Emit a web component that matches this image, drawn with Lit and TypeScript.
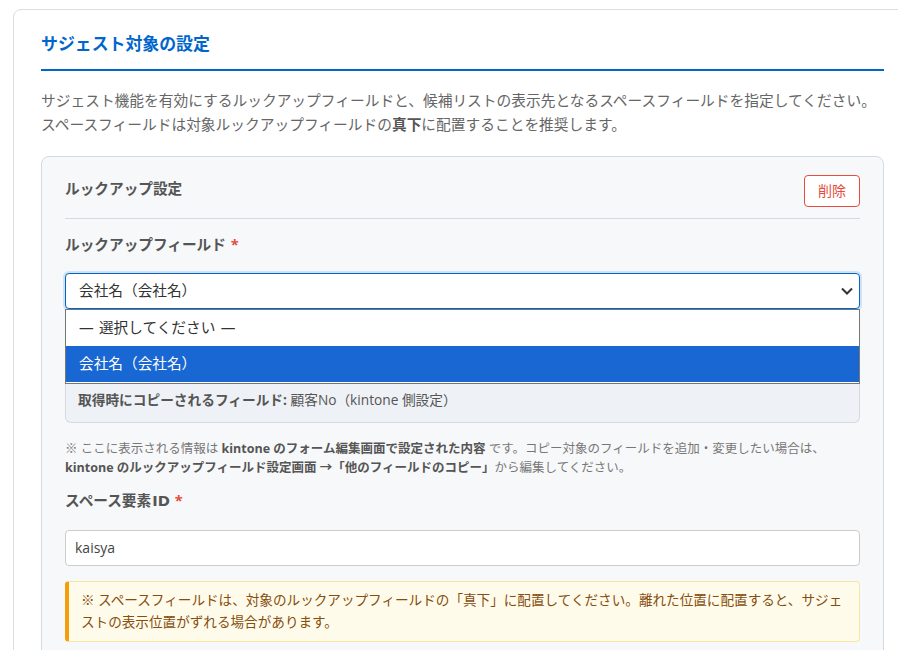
import { LitElement, css, html } from 'lit';
import { customElement } from 'lit/decorators.js';

const chevron = html`<svg class="chevron" viewBox="0 0 12 8" width="12" height="8"><path d="M1 1.5 6 6.5 11 1.5" fill="none" stroke="#333" stroke-width="2"/></svg>`;

@customElement('app-root')
export class AppRoot extends LitElement {
  static styles = css`
    :host {
      display: block;
      height: 650px;
      overflow: hidden;
      background: #fff;
      color: #555;
      font-family: "Open Sans", "Noto Sans CJK JP", sans-serif;
    }
    .page {
      padding: 9px 0 0 13px;
    }
    .section {
      width: 899px;
      box-sizing: border-box;
      background: #fff;
      border: 1px solid #ddd;
      border-radius: 8px;
      padding: 20px 27px 0;
    }
    h2 {
      margin: 0;
      box-sizing: border-box;
      font-size: 16.9px;
      line-height: 28px;
      font-weight: 700;
      color: #0066cc;
      border-bottom: 2px solid #0066cc;
      height: 41px;
    }
    .desc {
      margin: 17px 0 20px;
      font-size: 14.72px;
      line-height: 24px;
      color: #666;
      white-space: nowrap;
    }
    .desc b { color: #555; }
    .card {
      background: #f7f8fa;
      border: 1px solid #d5dae2;
      border-radius: 8px;
      padding: 18px 23px 0;
      height: 600px;
      box-sizing: border-box;
    }
    .card-head {
      display: flex;
      justify-content: space-between;
      align-items: flex-start;
      padding-bottom: 11px;
      border-bottom: 1px solid #d5dae2;
    }
    .card-head span {
      font-size: 14.67px;
      line-height: 26px;
      font-weight: 700;
      color: #555;
    }
    .del {
      width: 56px;
      height: 32px;
      box-sizing: border-box;
      border: 1px solid #e74c3c;
      border-radius: 4px;
      background: #fff;
      color: #e74c3c;
      font: inherit;
      font-size: 14px;
      padding: 0 0 3px;
    }
    .label {
      font-size: 14.67px;
      line-height: 22px;
      font-weight: 700;
      color: #555;
      word-spacing: 1px;
    }
    .label i {
      font-style: normal;
      color: #e74c3c;
    }
    .first-label { margin-top: 14px; }
    .select-wrap {
      position: relative;
      margin-top: 18px;
    }
    .select {
      display: flex;
      align-items: center;
      justify-content: space-between;
      height: 36px;
      box-sizing: border-box;
      padding: 0 6px 0 13px;
      background: #fff;
      border: 1px solid #0066cc;
      border-radius: 4px;
      box-shadow: 0 0 0 2px rgba(0, 102, 204, 0.15);
      font-size: 14.67px;
      color: #333;
    }
    .select span { margin-top: -3px; }
    .popup {
      position: absolute;
      top: 36px;
      left: 0;
      right: 0;
      box-sizing: border-box;
      padding-bottom: 1px;
      background: #fff;
      border: 1px solid #767676;
      font-size: 14.67px;
      color: #333;
    }
    .popup div {
      height: 36px;
      line-height: 35px;
      padding-left: 13px;
      word-spacing: 1.5px;
    }
    .popup .on {
      background: #1967d2;
      color: #fff;
    }
    .info {
      padding: 10px 12px 11px;
      height: 114px;
      box-sizing: border-box;
      background: #eef1f5;
      border: 1px solid #d5dae2;
      border-top: 0;
      border-radius: 0 0 6px 6px;
      font-size: 13.7px;
      line-height: 22px;
      color: #555;
      display: flex;
      flex-direction: column;
      justify-content: flex-end;
    }
    .help {
      margin: 16px 0 0;
      font-size: 12.5px;
      line-height: 19px;
      color: #777;
    }
    .help b { color: #555; }
    .space-label { margin-top: 12px; }
    .id {
      font-family: "DejaVu Sans", sans-serif;
      margin-left: 1px;
    }
    .input {
      margin-top: 18px;
      height: 36px;
      box-sizing: border-box;
      padding: 0 9px 2px;
      display: flex;
      align-items: center;
      background: #fff;
      border: 1px solid #ccc;
      border-radius: 4px;
      font-size: 14px;
      color: #444;
    }
    .warn {
      margin-top: 15px;
      padding: 7px 12px 8px;
      background: #fffbea;
      border: 1px solid #f5e6a3;
      border-left: 4px solid #f59e0b;
      border-radius: 4px;
      font-size: 13.6px;
      line-height: 21.76px;
      color: #854d0e;
    }
  `;

  render() {
    return html`
      <div class="page">
        <section class="section">
          <h2>サジェスト対象の設定</h2>
          <p class="desc">サジェスト機能を有効にするルックアップフィールドと、候補リストの表示先となるスペースフィールドを指定してください。<br>スペースフィールドは対象ルックアップフィールドの<b>真下</b>に配置することを推奨します。</p>
          <div class="card">
            <div class="card-head">
              <span>ルックアップ設定</span>
              <button class="del">削除</button>
            </div>
            <div class="label first-label">ルックアップフィールド <i>*</i></div>
            <div class="select-wrap">
              <div class="select"><span>会社名（会社名）</span>${chevron}</div>
              <div class="info"><div><b>取得時にコピーされるフィールド:</b> 顧客No（kintone 側設定）</div></div>
              <div class="popup">
                <div>— 選択してください —</div>
                <div class="on">会社名（会社名）</div>
              </div>
            </div>
            <p class="help">※ ここに表示される情報は <b>kintone のフォーム編集画面で設定された内容</b> です。コピー対象のフィールドを追加・変更したい場合は、<br><b>kintone のルックアップフィールド設定画面 →「他のフィールドのコピー」</b>から編集してください。</p>
            <div class="label space-label">スペース要素<span class="id">ID</span> <i>*</i></div>
            <div class="input">kaisya</div>
            <div class="warn">※ スペースフィールドは、対象のルックアップフィールドの「真下」に配置してください。離れた位置に配置すると、サジェストの表示位置がずれる場合があります。</div>
          </div>
        </section>
      </div>
    `;
  }
}
